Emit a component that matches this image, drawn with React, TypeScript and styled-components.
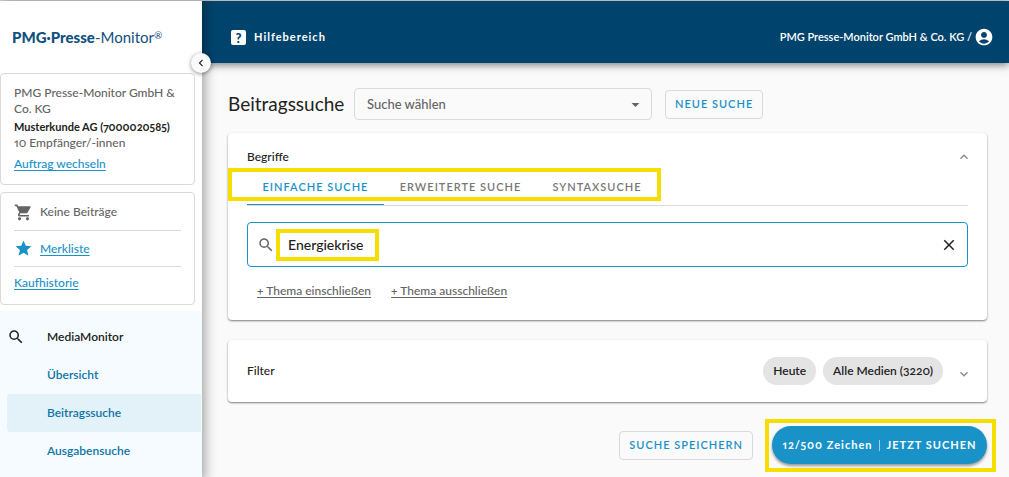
import React, { useState } from "react";
import styled, { createGlobalStyle } from "styled-components";
import {
  MdAccountCircle,
  MdArrowDropDown,
  MdChevronLeft,
  MdClose,
  MdExpandLess,
  MdExpandMore,
  MdSearch,
  MdShoppingCart,
  MdStar,
} from "react-icons/md";

const color = {
  navy: "#00446e",
  blue: "#1992c8",
  link: "#0f76a8",
  text: "#222",
  muted: "#646464",
  line: "#d9d9d9",
  mark: "#f6df00",
};

const GlobalStyle = createGlobalStyle`
  *, *::before, *::after { box-sizing: border-box; }
  body {
    margin: 0;
    background: #fafafa;
    color: ${color.text};
    font: 500 12px/16px Lato, "Open Sans", sans-serif;
    font-feature-settings: "onum", "pnum";
  }
  button, input, select { font: inherit; color: inherit; margin: 0; font-feature-settings: inherit; }
  button { cursor: pointer; }
  h1, h2, p, ul { margin: 0; padding: 0; }
`;

const Page = styled.div`
  display: grid;
  grid-template-columns: 202px minmax(0, 1fr);
  min-height: 100vh;
  border-top: 1px solid ${color.line};
`;

const Sidebar = styled.aside`
  position: relative;
  z-index: 2;
  display: flex;
  flex-direction: column;
  background: #fff;
  box-shadow: 2px 0 12px rgba(0, 0, 0, 0.4);
`;

const Logo = styled.a`
  display: flex;
  align-items: center;
  height: 72px;
  padding-left: 12px;
  color: #12507f;
  font-size: 15px;
  font-weight: 400;
  line-height: 20px;
  text-decoration: none;
  white-space: nowrap;

  b { font-weight: 900; }
  sup { font-size: 10px; line-height: 10px; vertical-align: 4px; }
`;

const CollapseButton = styled.button`
  position: absolute;
  top: 52px;
  right: -9px;
  display: grid;
  place-items: center;
  width: 20px;
  height: 20px;
  padding: 0;
  border: 0;
  border-radius: 50%;
  background: #fafafa;
  box-shadow: 0 1px 4px rgba(0, 0, 0, 0.45);
`;

const SideCard = styled.section`
  margin: 0 7px 7px 0;
  padding: 0 13px;
  border: 1px solid ${color.line};
  border-radius: 4px;
  color: ${color.muted};
`;

const Account = styled(SideCard)`
  display: flex;
  flex-direction: column;
  align-items: flex-start;
  height: 112px;
  padding-top: 11px;

  strong { margin-top: 2px; color: ${color.text}; font-size: 11px; font-weight: 700; white-space: nowrap; }
  a { margin-top: 5px; }
`;

const Link = styled.a`
  color: ${color.blue};
  text-decoration: underline;
  text-underline-offset: 2px;
`;

const ListRow = styled.div`
  display: flex;
  align-items: center;
  gap: 7px;
  height: 36px;

  & + & { border-top: 1px solid ${color.line}; }
  &:last-child { height: 33px; }
`;

const Lists = styled(SideCard)`
  height: 113px;
  margin-bottom: 6px;
  padding-top: 1px;
`;

const Nav = styled.nav`
  flex: 1;
  padding: 7px 0;
  background: #f5fbfe;
`;

const NavLink = styled.a<{ $active?: boolean; $root?: boolean }>`
  display: flex;
  align-items: center;
  height: 38px;
  margin: 0 1px 0 7px;
  border-radius: 4px 0 0 4px;
  background: ${(p) => (p.$active ? "#e3f1f8" : "transparent")};
  color: ${(p) => (p.$root ? color.text : color.link)};
  font-weight: 600;
  text-decoration: none;
`;

const NavIcon = styled.span`
  display: flex;
  width: 40px;
`;

const Main = styled.div`
  display: flex;
  flex-direction: column;
  min-width: 0;
`;

const Header = styled.header`
  display: flex;
  justify-content: space-between;
  align-items: center;
  height: 62px;
  padding: 10px 15px 0 29px;
  background: ${color.navy};
  box-shadow: 0 2px 8px rgba(0, 0, 0, 0.5);
  color: #fff;
`;

const HeaderLink = styled.a`
  display: flex;
  align-items: center;
  gap: 2px;
  color: inherit;
  font-size: 11px;
  font-weight: 600;
  text-decoration: none;
`;

const HelpLink = styled(HeaderLink)`
  gap: 8px;
  font-weight: 700;
  letter-spacing: 1px;
`;

const HelpMark = styled.span`
  display: grid;
  place-items: center;
  width: 15px;
  height: 15px;
  border-radius: 2px;
  background: #fff;
  color: ${color.navy};
  font-size: 13px;
  font-weight: 900;
  letter-spacing: 0;
`;

const Content = styled.main`
  display: flex;
  flex-direction: column;
  padding: 25px 22px 18px 26px;
`;

const TitleRow = styled.div`
  display: flex;
  align-items: center;
  height: 32px;
  gap: 13px;
  margin-bottom: 13px;
`;

const Title = styled.h1`
  width: 113px;
  font-size: 19px;
  font-weight: 400;
  line-height: 24px;
  white-space: nowrap;
`;

const SelectBox = styled.div`
  position: relative;
  width: 298px;

  svg { position: absolute; top: 7px; right: 7px; color: ${color.muted}; pointer-events: none; }
`;

const Select = styled.select`
  display: block;
  width: 100%;
  height: 32px;
  padding: 0 12px;
  appearance: none;
  border: 1px solid ${color.line};
  border-radius: 4px;
  background: transparent;
  color: ${color.muted};
  font-size: 13px;
`;

const OutlineButton = styled.button`
  height: 29px;
  padding: 0 9px;
  border: 1px solid ${color.line};
  border-radius: 4px;
  background: transparent;
  color: ${color.blue};
  font-size: 11px;
  font-weight: 600;
  letter-spacing: 1px;
  white-space: nowrap;
`;

const Card = styled.section`
  border-radius: 4px;
  background: #fff;
  box-shadow: 0 1px 2px rgba(0, 0, 0, 0.5);
`;

const TermsCard = styled(Card)`
  height: 187px;
  margin-bottom: 20px;
  padding: 12px 19px 0;
`;

const FilterCard = styled(Card)`
  display: flex;
  align-items: center;
  height: 62px;
  margin-bottom: 24px;
  padding: 0 15px 0 19px;
  gap: 7px;
`;

const CardHead = styled.div`
  display: flex;
  align-items: center;
  justify-content: space-between;
  height: 24px;
  margin-right: -4px;
`;

const CardTitle = styled.h2`
  flex: 1;
  font-size: 12px;
  font-weight: 500;
  line-height: 16px;
`;

const IconButton = styled.button`
  display: flex;
  padding: 0;
  border: 0;
  background: none;
`;

const FoldButton = styled(IconButton)`
  color: #8c8c8c;
`;

const Marked = styled.div`
  position: relative;
`;

const Marker = styled.span<{ $inset: string }>`
  position: absolute;
  inset: ${(p) => p.$inset};
  border: 4px solid ${color.mark};
  pointer-events: none;
`;

const Tabs = styled.div`
  display: flex;
  height: 37px;
  margin-bottom: 16px;
  border-bottom: 1px solid ${color.line};
`;

const TabGroup = styled(Marked)`
  display: flex;
`;

const Tab = styled.button<{ $active: boolean; $width: number }>`
  width: ${(p) => p.$width}px;
  height: 36px;
  padding: 0;
  border: 0;
  border-bottom: 1px solid ${(p) => (p.$active ? color.blue : "transparent")};
  background: none;
  color: ${(p) => (p.$active ? color.blue : "#777")};
  font-size: 11px;
  font-weight: 600;
  letter-spacing: 1px;
  white-space: nowrap;
`;

const SearchField = styled.div`
  display: flex;
  align-items: center;
  height: 45px;
  padding: 0 9px;
  gap: 13px;
  border: 1px solid ${color.blue};
  border-radius: 4px;

  > svg { color: ${color.muted}; }
  ${Marked} { flex: 1; }
`;

const WordMarker = styled(Marker)`
  width: 103px;
`;

const SearchInput = styled.input`
  display: block;
  width: 100%;
  height: 24px;
  padding: 0;
  border: 0;
  outline: 0;
  background: none;
  font-size: 14px;
  font-weight: 500;
`;

const TopicLinks = styled.div`
  display: flex;
  gap: 20px;
  padding: 16px 10px;
`;

const TopicLink = styled(Link)`
  color: ${color.muted};
`;

const Chip = styled.span`
  height: 28px;
  padding: 0 10px;
  border-radius: 14px;
  background: #e4e4e4;
  font-weight: 600;
  line-height: 28px;
  white-space: nowrap;
`;

const ChipFold = styled(FoldButton)`
  margin: 6px 0 0 6px;
`;

const Actions = styled.div`
  display: flex;
  justify-content: flex-end;
  align-items: center;
  gap: 19px;
`;

const SubmitButton = styled.button`
  display: flex;
  align-items: center;
  justify-content: center;
  width: 215px;
  height: 38px;
  padding: 0;
  border: 0;
  border-radius: 19px;
  background: ${color.blue};
  box-shadow: 0 2px 3px rgba(0, 0, 0, 0.4);
  color: #fff;
  font-size: 11px;
  font-weight: 700;
  letter-spacing: 1px;
  white-space: nowrap;
`;

const Divider = styled.span`
  width: 1px;
  height: 11px;
  margin: 0 7px 0 6px;
  background: #9fd2ea;
`;

const tabs = [
  { label: "EINFACHE SUCHE", width: 137 },
  { label: "ERWEITERTE SUCHE", width: 153 },
  { label: "SYNTAXSUCHE", width: 120 },
];

export default function App() {
  const [tab, setTab] = useState(0);
  const [term, setTerm] = useState("Energiekrise");

  return (
    <>
      <GlobalStyle />
      <Page>
        <Sidebar>
          <Logo href="#">
            <span>
              <b>PMG·Presse</b>-Monitor<sup>®</sup>
            </span>
          </Logo>
          <CollapseButton aria-label="Menü einklappen">
            <MdChevronLeft size={14} />
          </CollapseButton>
          <Account>
            <p>PMG Presse-Monitor GmbH &amp; Co. KG</p>
            <strong>Musterkunde AG (7000020585)</strong>
            <span>10 Empfänger/-innen</span>
            <Link href="#">Auftrag wechseln</Link>
          </Account>
          <Lists>
            <ListRow>
              <MdShoppingCart size={19} />
              <span>Keine Beiträge</span>
            </ListRow>
            <ListRow>
              <MdStar size={19} color={color.blue} />
              <Link href="#">Merkliste</Link>
            </ListRow>
            <ListRow>
              <Link href="#">Kaufhistorie</Link>
            </ListRow>
          </Lists>
          <Nav>
            <NavLink href="#" $root>
              <NavIcon>
                <MdSearch size={18} />
              </NavIcon>
              MediaMonitor
            </NavLink>
            {["Übersicht", "Beitragssuche", "Ausgabensuche"].map((label) => (
              <NavLink key={label} href="#" $active={label === "Beitragssuche"}>
                <NavIcon />
                {label}
              </NavLink>
            ))}
          </Nav>
        </Sidebar>

        <Main>
          <Header>
            <HelpLink href="#">
              <HelpMark>?</HelpMark>
              Hilfebereich
            </HelpLink>
            <HeaderLink href="#">
              PMG Presse-Monitor GmbH &amp; Co. KG /
              <MdAccountCircle size={20} />
            </HeaderLink>
          </Header>

          <Content>
            <TitleRow>
              <Title>Beitragssuche</Title>
              <SelectBox>
                <Select aria-label="Suche wählen">
                  <option>Suche wählen</option>
                </Select>
                <MdArrowDropDown size={19} />
              </SelectBox>
              <OutlineButton>NEUE SUCHE</OutlineButton>
            </TitleRow>

            <TermsCard>
              <CardHead>
                <CardTitle>Begriffe</CardTitle>
                <FoldButton aria-label="Begriffe einklappen">
                  <MdExpandLess size={16} />
                </FoldButton>
              </CardHead>
              <Tabs>
                <TabGroup role="tablist">
                  {tabs.map((t, i) => (
                    <Tab
                      key={t.label}
                      role="tab"
                      aria-selected={i === tab}
                      $active={i === tab}
                      $width={t.width}
                      onClick={() => setTab(i)}
                    >
                      {t.label}
                    </Tab>
                  ))}
                  <Marker $inset="-1px -4px 4px -19px" />
                </TabGroup>
              </Tabs>
              <SearchField>
                <MdSearch size={18} />
                <Marked>
                  <SearchInput
                    aria-label="Suchbegriff"
                    value={term}
                    onChange={(e) => setTerm(e.target.value)}
                  />
                  <WordMarker $inset="-4px auto -4px -12px" />
                </Marked>
                <IconButton aria-label="Eingabe löschen" onClick={() => setTerm("")}>
                  <MdClose size={18} />
                </IconButton>
              </SearchField>
              <TopicLinks>
                <TopicLink href="#">+ Thema einschließen</TopicLink>
                <TopicLink href="#">+ Thema ausschließen</TopicLink>
              </TopicLinks>
            </TermsCard>

            <FilterCard>
              <CardTitle>Filter</CardTitle>
              <Chip>Heute</Chip>
              <Chip>Alle Medien (3220)</Chip>
              <ChipFold aria-label="Filter ausklappen">
                <MdExpandMore size={16} />
              </ChipFold>
            </FilterCard>

            <Actions>
              <OutlineButton>SUCHE SPEICHERN</OutlineButton>
              <Marked>
                <SubmitButton>
                  12/500 Zeichen
                  <Divider />
                  JETZT SUCHEN
                </SubmitButton>
                <Marker $inset="-7px -9px -8px -7px" />
              </Marked>
            </Actions>
          </Content>
        </Main>
      </Page>
    </>
  );
}
